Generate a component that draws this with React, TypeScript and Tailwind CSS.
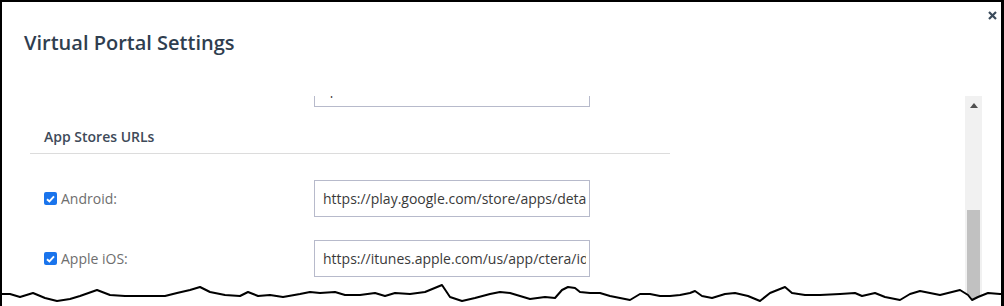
import React from 'react';

const tear: [number, number][] = [
  [0, 294], [10, 294], [20, 297], [33, 293], [45, 298], [57, 301], [70, 299], [80, 296],
  [97, 290], [110, 295], [125, 296], [140, 296], [155, 296], [165, 296], [177, 293],
  [190, 290], [200, 287], [210, 292], [225, 295], [240, 296], [248, 292], [258, 296],
  [270, 295], [283, 297], [300, 294], [310, 292], [320, 293], [335, 292], [345, 295],
  [360, 295], [375, 293], [385, 296], [395, 293], [410, 294], [425, 292], [442, 285],
  [450, 297], [462, 301], [475, 298], [490, 294], [500, 292], [510, 293], [520, 296],
  [530, 299], [545, 297], [555, 298], [562, 290], [568, 287], [575, 288], [580, 292],
  [590, 293], [600, 293], [610, 296], [620, 298], [630, 300], [640, 294], [650, 294],
  [660, 296], [670, 296], [680, 295], [690, 293], [695, 291], [702, 296], [712, 298],
  [725, 294], [735, 293], [748, 296], [760, 301], [770, 293], [785, 287], [792, 293],
  [805, 295], [820, 295], [840, 294], [855, 293], [862, 296], [875, 293], [885, 297],
  [900, 300], [910, 294], [920, 291], [930, 293], [940, 295], [960, 290], [968, 295],
  [972, 300], [978, 297], [988, 293], [1000, 294], [1004, 294],
];

function Checkbox() {
  return (
    <span className="flex h-[13px] w-[13px] items-center justify-center rounded-[2px] bg-[#1a74ec]">
      <svg width="9" height="8" viewBox="0 0 9 8">
        <path d="M1 4.2 L3.4 6.5 L8 1.3" fill="none" stroke="#fff" strokeWidth="1.9" />
      </svg>
    </span>
  );
}

function Field({ value }: { value: string }) {
  return (
    <div className="flex h-[37px] w-[276px] items-center border border-[#b7bacb] pl-[8px] pr-[3px] text-[14px] text-[#3a3a3a]">
      <span className="block overflow-hidden whitespace-nowrap">{value}</span>
    </div>
  );
}

function UrlRow({ label, value }: { label: string; value: string }) {
  return (
    <div className="flex items-center pl-[14px]">
      <div className="flex w-[270px] items-center gap-[4px] text-[14px] text-[#6e6e6e]">
        <Checkbox />
        <span>{label}</span>
      </div>
      <Field value={value} />
    </div>
  );
}

export default function App() {
  const pts = tear.map(([x, y]) => `${x},${y}`).join(' ');
  return (
    <div className="relative h-[306px] w-[1004px] overflow-hidden border-t-2 border-l-2 border-r-[3px] border-black bg-white font-['Open_Sans','Liberation_Sans',sans-serif]">
      <button className="absolute right-[4px] top-[9px]">
        <svg width="9" height="9" viewBox="0 0 9 9">
          <path d="M1 1 L8 8 M8 1 L1 8" stroke="#3b4b5b" strokeWidth="2.2" />
        </svg>
      </button>

      <div className="h-[94px] pl-[22px] pt-[27px]">
        <h1 className="text-[20px] font-semibold leading-[28px] text-[#2f3e4f]">Virtual Portal Settings</h1>
      </div>

      <div className="flex h-[210px]">
        <div className="flex-1 overflow-hidden">
          <div className="-mt-[26px] ml-[28px] w-[640px]">
            <div className="flex pl-[14px]">
              <div className="w-[270px]" />
              <Field value="spaces" />
            </div>
            <div className="mt-[20px] border-b border-[#dcdcdc] pb-[6px] pl-[14px] text-[14px] font-semibold leading-[20px] text-[#3e4a59]">
              App Stores URLs
            </div>
            <div className="mt-[26px] flex flex-col gap-[23px]">
              <UrlRow label="Android:" value="https://play.google.com/store/apps/details?id=com.ctera" />
              <UrlRow label="Apple iOS:" value="https://itunes.apple.com/us/app/ctera/id1234567" />
            </div>
          </div>
        </div>

        <div className="mr-[19px] flex w-[17px] flex-col items-center bg-[#f1f1f1]">
          <svg className="mt-[7px]" width="8" height="5" viewBox="0 0 8 5">
            <path d="M0 5 L4 0 L8 5 Z" fill="#505050" />
          </svg>
          <div className="mt-[102px] h-[90px] w-[13px] bg-[#c1c1c1]" />
        </div>
      </div>

      <svg className="pointer-events-none absolute -left-[2px] -top-[2px]" width="1004" height="306" viewBox="0 0 1004 306">
        <polygon points={`${pts} 1004,306 0,306`} fill="#fff" />
        <polyline points={pts} fill="none" stroke="#000" strokeWidth="2" strokeLinejoin="round" />
      </svg>
    </div>
  );
}
